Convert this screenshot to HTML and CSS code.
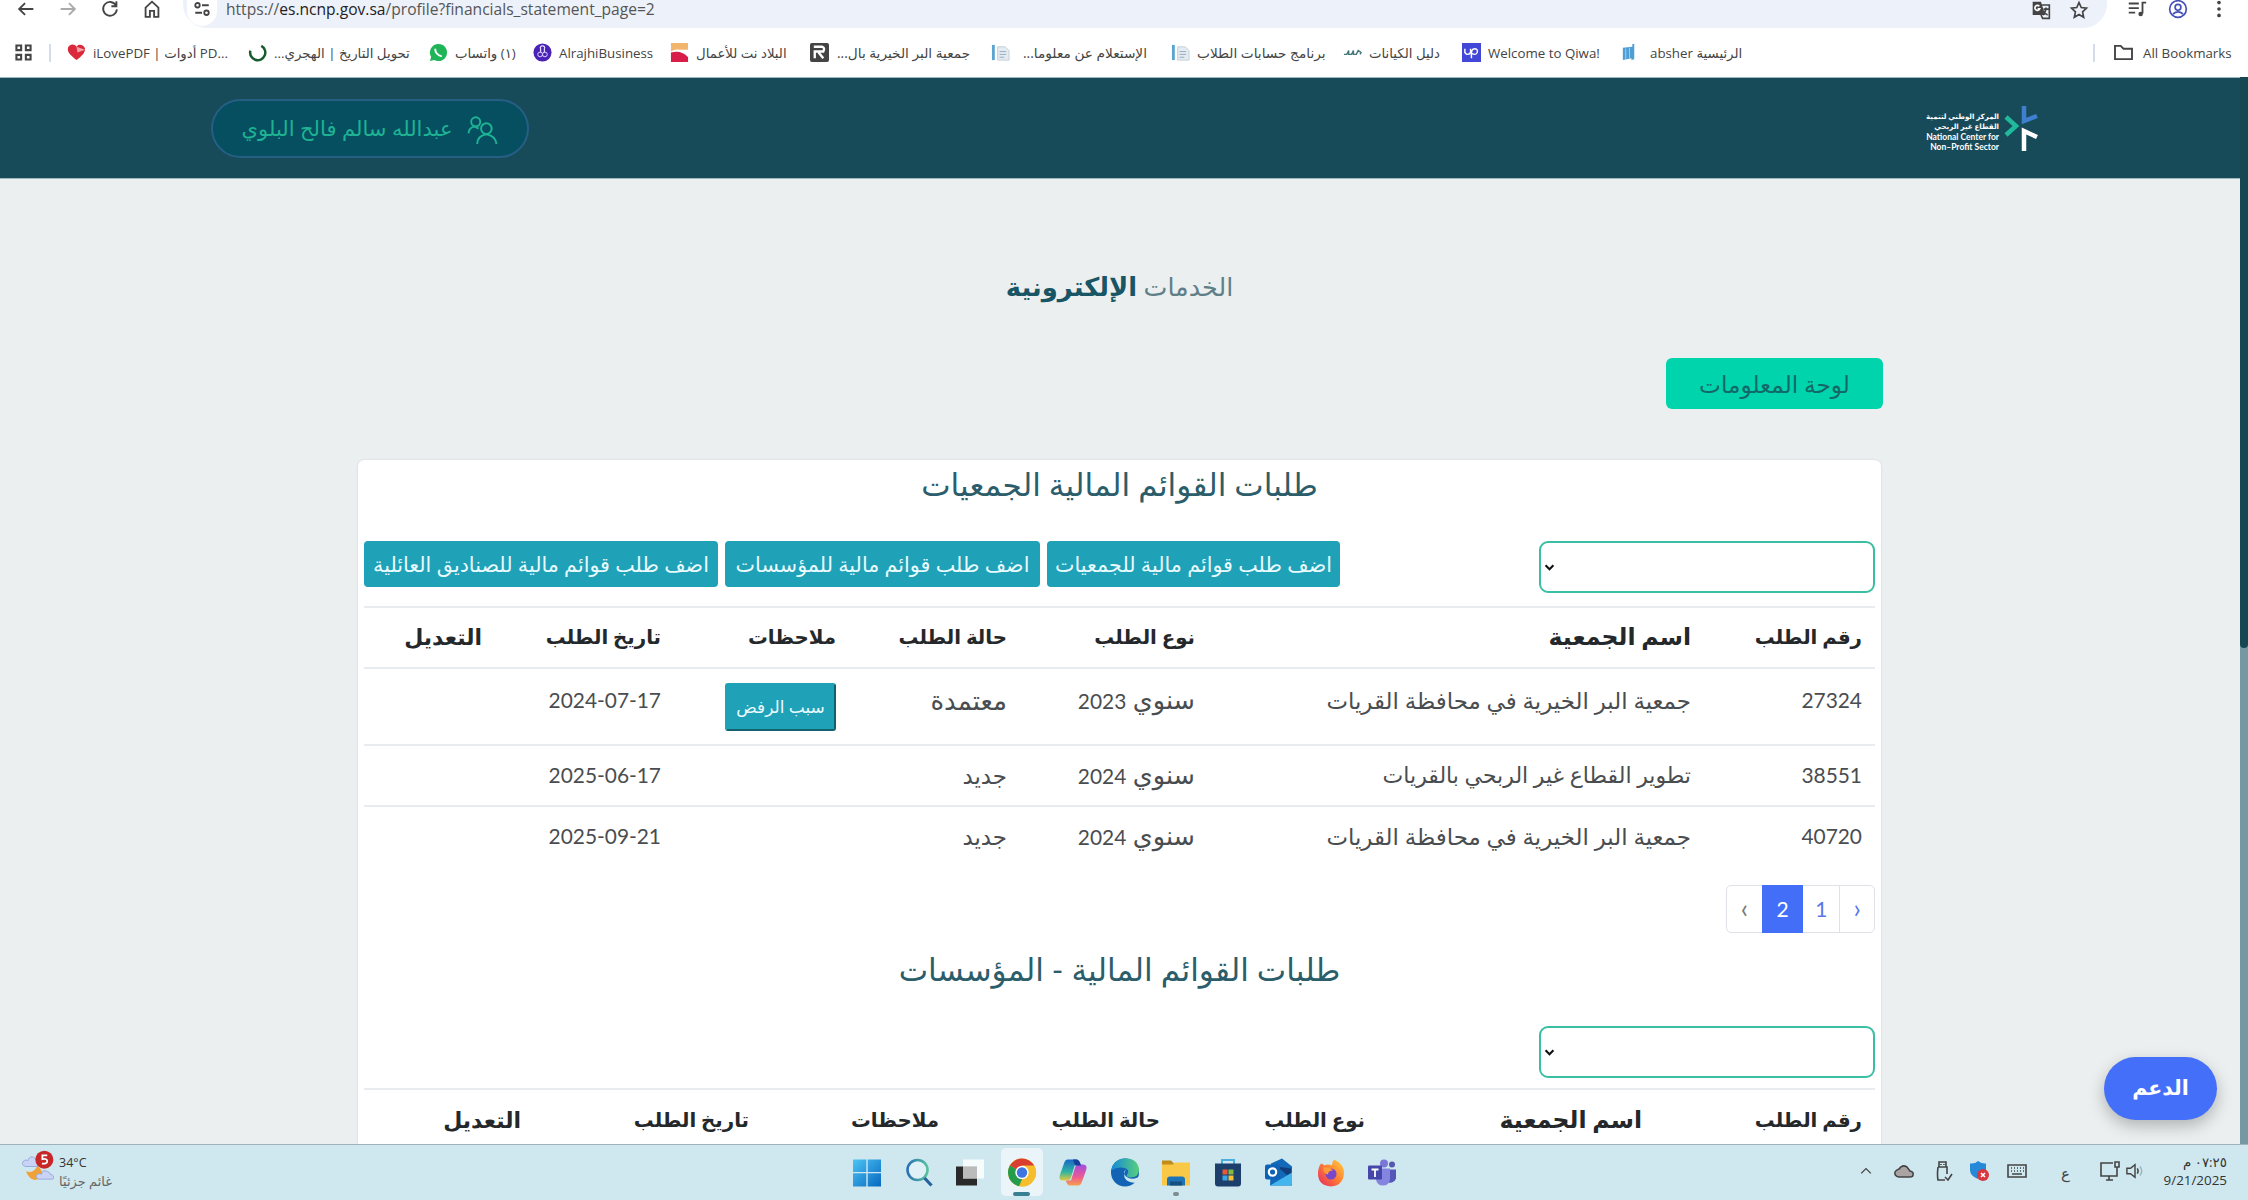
FILE: index.html
```html
<!DOCTYPE html>
<html lang="ar">
<head>
    <meta charset="UTF-8">
    <meta name="viewport" content="width=device-width, initial-scale=1.0">
    <title>الخدمات الإلكترونية</title>
    <link rel="stylesheet" href="styles.css">
</head>
<body>
    <!-- Browser toolbar -->
    <div class="toolbar">
        <svg class="nav-icon" viewBox="0 0 24 24"><path d="M20 12H5M11 5.500 4.500 12l6.500 6.500"/></svg>
        <svg class="nav-icon faded" viewBox="0 0 24 24"><path d="M4 12h15M13 5.500 19.500 12 13 18.500"/></svg>
        <svg class="nav-icon" viewBox="0 0 24 24"><path d="M18.500 8A7.500 7.500 0 1 0 19.500 12.500M19 3.500V9h-5.500"/></svg>
        <svg class="nav-icon" viewBox="0 0 24 24"><path d="M5 10.500 12 4l7 6.500V20.500h-4.700v-6.500H9.700v6.500H5z"/></svg>
        <div class="address">
            <span class="site-info"><svg viewBox="0 0 24 24"><circle cx="6" cy="7" r="3"/><path d="M12 7h9M3 17h9"/><circle cx="18" cy="17" r="3"/></svg></span>
            <span class="url"><i>https://</i>es.ncnp.gov.sa<i>/profile?financials_statement_page=2</i></span>
            <svg class="address-icon translate" viewBox="0 0 24 24"><path class="solid" d="M2 2h10l5 16H2z"/><path d="M13 6h9v16h-8l-2-4M15 11h6M18 9v2q-1 5-4 7M15 13q2 4 5 5"/><path class="letter" d="M10 7.500a3 3 0 1 0 .5 3H8"/></svg>
            <svg class="address-icon" viewBox="0 0 24 24"><path d="m12 3 2.700 6.100 6.300.7-4.700 4.400 1.300 6.500L12 17.300l-5.600 3.400 1.300-6.500L3 9.800l6.300-.7z"/></svg>
        </div>
        <svg class="nav-icon media" viewBox="0 0 24 24"><path d="M3 6h11M3 11h11M3 16h7M18 17V5h4"/><circle class="solid" cx="16" cy="17.500" r="2.500"/></svg>
        <svg class="nav-icon profile" viewBox="0 0 24 24"><circle cx="12" cy="12" r="10"/><circle cx="12" cy="10" r="3.500"/><path d="M6 18q6-5 12 0"/></svg>
        <svg class="nav-icon more" viewBox="0 0 24 24"><circle cx="12" cy="5" r="2"/><circle cx="12" cy="12" r="2"/><circle cx="12" cy="19" r="2"/></svg>
    </div>

    <!-- Bookmarks -->
    <div class="bookmarks">
        <svg class="apps" viewBox="0 0 18 18"><path d="M1.500 1.500h5v5h-5zM11.500 1.500h5v5h-5zM1.500 11.500h5v5h-5zM11.500 11.500h5v5h-5z"/></svg>
        <span class="divider"></span>
        <div class="bm bm-pdf"><svg viewBox="0 0 20 20"><path fill="#d9293a" d="M10 18C4 13 0 10 1 5c1-4 7-5 9-1 2-4 8-2 9 2 0 5-4 8-9 12z"/><path fill="#f3a3a8" d="m10 4 9 3-8 3z"/></svg><span>iLovePDF | أدوات PD...</span></div>
        <div class="bm bm-date"><svg viewBox="0 0 20 20"><path fill="none" stroke="#175c2f" stroke-width="2.600" d="M14 3a8 8 0 1 1-11.500 5"/></svg><span dir="rtl">تحويل التاريخ | الهجري...</span></div>
        <div class="bm bm-wa"><svg viewBox="0 0 20 20"><path fill="#1fb457" d="M10 1a9 9 0 1 1-4.500 16.800L1 19l1.300-4.300A9 9 0 0 1 10 1z"/><path fill="none" stroke="#fff" stroke-width="2" d="M6.500 6q0 6 7 8"/></svg><span dir="rtl">(١) واتساب</span></div>
        <div class="bm bm-rajhi"><svg viewBox="0 0 20 20"><circle cx="10" cy="10" r="9.500" fill="#4a22b5"/><path fill="none" stroke="#e4dcff" stroke-width="1.300" d="M10 3a2 2 0 0 1 2 3v4M10 3a2 2 0 0 0-2 3v4"/><circle cx="7.500" cy="12" r="2.500" fill="none" stroke="#e4dcff"/><circle cx="12.500" cy="12" r="2.500" fill="none" stroke="#e4dcff"/></svg><span>AlrajhiBusiness</span></div>
        <div class="bm bm-bilad"><svg viewBox="0 0 20 20"><path fill="#f1b66c" d="M1 0h18v9H1z"/><path fill="#fff" d="M1 9q4-3 9-2h9v3H1z"/><path fill="#d81e48" d="M1 10q11-3 18 5v5H1z"/></svg><span dir="rtl">البلاد نت للأعمال</span></div>
        <div class="bm bm-birr"><svg viewBox="0 0 20 20"><rect width="20" height="20" rx="2" fill="#444"/><path fill="none" stroke="#fff" stroke-width="2.500" d="M5 16V9h9q2-4-1-5H4M9 10l5 6"/></svg><span dir="rtl">جمعية البر الخيرية بال...</span></div>
        <div class="bm bm-info"><svg viewBox="0 0 20 20"><path fill="#5ba4cf" d="M1 2h3v16H1z"/><path fill="#e4ebf1" stroke="#c4ced8" d="M7 4h8l4 4v10H7z"/><path stroke="#93abc0" d="M9 9h7M9 12h7M9 15h5"/></svg><span dir="rtl">الإستعلام عن معلوما...</span></div>
        <div class="bm bm-students"><svg viewBox="0 0 20 20"><path fill="#5ba4cf" d="M1 2h3v16H1z"/><path fill="#e4ebf1" stroke="#c4ced8" d="M7 4h8l4 4v10H7z"/><path stroke="#93abc0" d="M9 9h7M9 12h7M9 15h5"/></svg><span dir="rtl">برنامج حسابات الطلاب</span></div>
        <div class="bm bm-guide"><svg viewBox="0 0 20 20"><path fill="none" stroke="#40777b" stroke-width="1.500" d="M1 12h3l2-4v4h3l2-4v4h3l2-4 3 2-1 2"/></svg><span dir="rtl">دليل الكيانات</span></div>
        <div class="bm bm-qiwa"><svg viewBox="0 0 20 20"><rect width="20" height="20" fill="#4347d8"/><path fill="none" stroke="#fff" stroke-width="1.500" d="M3 6v4q3 4 6 0V6m0 4q5 4 7 0 1-4-3-4t-3 10"/></svg><span>Welcome to Qiwa!</span></div>
        <div class="bm bm-absher"><svg viewBox="0 0 20 20"><path fill="#4f9ed6" d="M3 5 13 4V1h2v16l-3 1v-2L3 18z"/><path stroke="#a4cdea" d="M6 6v11M10 5v11"/></svg><span>absher الرئيسية</span></div>
        <span class="divider last"></span>
        <svg class="folder" viewBox="0 0 22 18"><path d="M2 2h6l3 3h9v11H2z"/></svg>
        <span class="all">All Bookmarks</span>
    </div>

    <div class="viewport">
        <div class="page" dir="rtl">
            <header>
                <div class="logo">
                    <svg viewBox="0 0 36 48"><path stroke="#3f7fd0" d="M20 2v15l13-5"/><path stroke="#20b99c" d="m2 13 10 9-10 9"/><path stroke="#fff" d="M20 47V27l13 6"/></svg>
                    <div class="logo-text">
                        <span class="ar">المركز الوطني لتنمية</span>
                        <span class="ar">القطاع غير الربحي</span>
                        <span dir="ltr">National Center for</span>
                        <span dir="ltr">Non–Profit Sector</span>
                    </div>
                </div>
                <a class="user">
                    <svg viewBox="0 0 32 30"><circle cx="9" cy="6" r="4.700"/><circle cx="20" cy="13" r="5.500"/><path d="M1.500 18q.5-6.500 6.500-7l4 2M10.500 29q.500-9 9.500-10 9 1 10.500 10"/></svg>
                    <span>عبدالله سالم فالح البلوي</span>
                </a>
            </header>

            <main>
                <h1>الخدمات <b>الإلكترونية</b></h1>
                <a class="dashboard">لوحة المعلومات</a>

                <div class="card">
                    <h2>طلبات القوائم المالية الجمعيات</h2>
                    <div class="filters">
                        <div class="select"><svg viewBox="0 0 12 8"><path d="m1.500 1.500 4.500 4.500 4.500-4.500"/></svg></div>
                        <div class="actions">
                            <a class="btn btn-assoc">اضف طلب قوائم مالية للجمعيات</a>
                            <a class="btn btn-found">اضف طلب قوائم مالية للمؤسسات</a>
                            <a class="btn btn-family">اضف طلب قوائم مالية للصناديق العائلية</a>
                        </div>
                    </div>
                    <table class="requests">
                        <thead>
                            <tr><th>رقم الطلب</th><th class="wide">اسم الجمعية</th><th>نوع الطلب</th><th>حالة الطلب</th><th>ملاحظات</th><th>تاريخ الطلب</th><th class="edit">التعديل</th></tr>
                        </thead>
                        <tbody>
                            <tr><td class="num">27324</td><td>جمعية البر الخيرية في محافظة القريات</td><td class="kind">سنوي <span class="num">2023</span></td><td class="status">معتمدة</td><td class="note"><button>سبب الرفض</button></td><td class="num">2024-07-17</td><td></td></tr>
                            <tr><td class="num">38551</td><td class="tight">تطوير القطاع غير الربحي بالقريات</td><td class="kind">سنوي <span class="num">2024</span></td><td>جديد</td><td></td><td class="num">2025-06-17</td><td></td></tr>
                            <tr><td class="num">40720</td><td>جمعية البر الخيرية في محافظة القريات</td><td class="kind">سنوي <span class="num">2024</span></td><td>جديد</td><td></td><td class="num">2025-09-21</td><td></td></tr>
                        </tbody>
                    </table>
                    <div class="pagination">
                        <span class="arrow">‹</span><span class="one">1</span><span class="active">2</span><span class="arrow off">›</span>
                    </div>

                    <h2>طلبات القوائم المالية - المؤسسات</h2>
                    <div class="filters short">
                        <div class="select"><svg viewBox="0 0 12 8"><path d="m1.500 1.500 4.500 4.500 4.500-4.500"/></svg></div>
                    </div>
                    <table class="foundations">
                        <thead>
                            <tr><th>رقم الطلب</th><th class="wide">اسم الجمعية</th><th>نوع الطلب</th><th>حالة الطلب</th><th>ملاحظات</th><th>تاريخ الطلب</th><th class="edit">التعديل</th></tr>
                        </thead>
                    </table>
                </div>
            </main>
        </div>
        <div class="scrollbar"><div class="thumb"></div></div>
        <a class="support">الدعم</a>
    </div>

    <!-- Taskbar -->
    <div class="taskbar">
        <div class="weather">
            <svg viewBox="0 0 34 34"><path fill="#f0a13a" d="M4 22q8 3 12-6 8 8 4 12-10 8-16-6z"/><path fill="#c9d3f4" stroke="#9aa9dd" d="M4 17q-5-1-3-5 3-3 5-1 2-6 7-3 3 2 3 9zM17 30q-4-2-1-5 2-1 4 0 1-5 6-3 3 1 3 3 5 1 3 5z"/><circle cx="23" cy="10" r="9.300" fill="#c62828"/><path fill="none" stroke="#fff" stroke-width="1.800" d="M26 5.500h-5v4q5-1 5 2t-5.500 2.500"/></svg>
            <div class="weather-text"><span>34°C</span><span class="desc" dir="rtl">غائم جزئيًا</span></div>
        </div>

        <div class="apps-row">
            <span class="app"><svg viewBox="0 0 28 28"><defs><linearGradient id="win" x2="1" y2="1"><stop stop-color="#4cc4f5"/><stop offset="1" stop-color="#0868c0"/></linearGradient></defs><path fill="url(#win)" d="M0 1h13.300v12.400H0zM14.700 1H28v12.400H14.700zM0 14.700h13.300V28H0zM14.700 14.700H28V28H14.700z"/></svg></span>
            <span class="app"><svg viewBox="0 0 28 28"><defs><linearGradient id="lens"><stop stop-color="#2b6fb5"/><stop offset="1" stop-color="#58c19c"/></linearGradient></defs><circle cx="12.500" cy="11.500" r="10" fill="#dff1f6" stroke="url(#lens)" stroke-width="2.600"/><path stroke="#27629f" stroke-width="3.200" d="m19.500 19.500 7 7.500"/></svg></span>
            <span class="app"><svg viewBox="0 0 28 28"><path fill="#292929" d="M0 8h21v19H0z"/><path fill="#fff" fill-opacity=".8" d="M7 1h21v19H7z"/><path fill="#bbb" d="M7 8h14v12H7z"/></svg></span>
            <span class="app current"><svg viewBox="0 0 28 28"><circle cx="14" cy="14" r="14" fill="#f6bd2c"/><path fill="#d93e30" d="M14 14 1.900 7A14 14 0 0 1 26.100 7z"/><path fill="#249b4d" d="M1.900 7 14 14v7l-3 6.700A14 14 0 0 1 1.900 7z"/><path fill="#f6bd2c" d="M14 7h12.100A14 14 0 0 1 12.500 28L20 17z"/><circle cx="14" cy="14" r="6.700" fill="#fff"/><circle cx="14" cy="14" r="5.200" fill="#3d76e0"/></svg></span>
            <span class="app"><svg viewBox="0 0 28 28"><defs><linearGradient id="cop1" y2="1" x2="0"><stop stop-color="#1967c9"/><stop offset=".6" stop-color="#32b5a0"/><stop offset="1" stop-color="#e4c93d"/></linearGradient><linearGradient id="cop2" y2="1" x2="0"><stop stop-color="#a44ce0"/><stop offset=".6" stop-color="#ee5a91"/><stop offset="1" stop-color="#f7a04c"/></linearGradient></defs><path fill="url(#cop1)" d="M9 1h8q3 0 4 5h-5l-4 13q-1 3-4 3H4q-5 0-3-6L5 5q1-4 4-4z"/><path fill="url(#cop2)" d="M19 27h-8q-3 0-4-5h5l4-13q1-3 4-3h4q5 0 3 6l-4 11q-1 4-4 4z"/><path fill="#163f9c" d="M14 1h4q3 1 4 6h-6z"/></svg></span>
            <span class="app"><svg viewBox="0 0 28 28"><defs><linearGradient id="edge"><stop stop-color="#1689d8"/><stop offset="1" stop-color="#58d07c"/></linearGradient></defs><circle cx="14" cy="14" r="14" fill="#1263b4"/><path fill="url(#edge)" d="M.500 12C2-4 27-4 28 11q0 8-9 8-4 0-3-3 3-4-1-6-8-3-14.500 2z"/><path fill="#cfe8ef" d="M15 11q-4 3 0 7 5 4 11.500 1l2-1v6h-3q-9 1-12-5-1-5 1.500-8z"/></svg></span>
            <span class="app opened"><svg viewBox="0 0 28 28"><path fill="#c38b18" d="M0 2h9l3 3v3H0z"/><path fill="#f9c846" d="M0 6h11l2-2h15v23H0z"/><path fill="#1d73b8" d="M5 27v-6q0-3 3-3h12q3 0 3 3v6z"/><path fill="#174f80" d="M8 23h12v4H8z"/></svg></span>
            <span class="app"><svg viewBox="0 0 28 28"><path fill="none" stroke="#4aaee0" stroke-width="2" d="M8 6V1.500h12V6"/><path fill="#1c3f6b" d="M1 5h26v20q0 3-3 3H4q-3 0-3-3z"/><path fill="#e85838" d="M8.500 11h5v5h-5z"/><path fill="#7fba42" d="M14.500 11h5v5h-5z"/><path fill="#3aa4e8" d="M8.500 17h5v5h-5z"/><path fill="#f4c23a" d="M14.500 17h5v5h-5z"/></svg></span>
            <span class="app"><svg viewBox="0 0 28 28"><path fill="#1169b8" d="M6 5 17 0l10 8v19H5z"/><path fill="#123f7c" d="m12 8 14 2v10z"/><path fill="#45b5ee" d="m5 27 22-13v11q0 2-3 2z"/><rect y="6" width="15" height="15" rx="2" fill="#0e62b6"/><circle cx="7.500" cy="13.500" r="3.700" fill="none" stroke="#fff" stroke-width="2.200"/></svg></span>
            <span class="app"><svg viewBox="0 0 28 28"><defs><linearGradient id="fox" x1="1" x2="0" y2="1"><stop stop-color="#ffd43d"/><stop offset=".5" stop-color="#ff7b32"/><stop offset="1" stop-color="#e52568"/></linearGradient></defs><path fill="url(#fox)" d="M4 5q2 0 3 2 4-2 8 0 0-4 2-6 9 4 10 12 0 14-13 15Q1 27 1 15 1 9 4 5z"/><circle cx="14" cy="15.500" r="5.500" fill="#7848c9"/><path fill="#ff9b39" d="M6 9q6-1 10 3-5 0-5 4-5-1-5-7z"/></svg></span>
            <span class="app"><svg viewBox="0 0 28 28"><circle cx="16" cy="5" r="4" fill="#7b77d8"/><circle cx="24" cy="6" r="3" fill="#5558b0"/><path fill="#5457b5" d="M19 11h9v9q-2 5-8 4z"/><path fill="#8584e0" d="M10 10h12v11q-1 6-7 6t-7-6z"/><rect y="7" width="14" height="14" rx="1" fill="#4548a8"/><path fill="none" stroke="#fff" stroke-width="1.800" d="M3.500 11h7M7 11v7.500"/></svg></span>
        </div>

        <div class="tray">
            <svg class="t-chevron" viewBox="0 0 20 20"><path d="m4 13 6-6 6 6"/></svg>
            <svg class="t-cloud" viewBox="0 0 20 20"><path fill="#aaa4a4" d="M5 16Q0 15 1 11q1-2 4-3 3-5 8-2l3 4q4 1 3 4 0 2-3 2z"/></svg>
            <svg class="t-usb" viewBox="0 0 20 20"><path d="M6 1h7v5H6zM5 6h9v7M5 6q-1 8 0 13h7M12 16l3 3 4-6M8 3v1M11 3v1"/></svg>
            <svg class="t-shield" viewBox="0 0 20 20"><path fill="#2589d8" stroke="none" d="M9 0q4 3 8 2.500V9q0 6-8 9-8-3-8-9V2.500Q6 3 9 0z"/><circle cx="14" cy="14" r="6" fill="#d9363e" stroke="none"/><path stroke="#fff" d="m12 12 4 4m0-4-4 4"/></svg>
            <svg class="t-keys" viewBox="0 0 20 20"><path d="M1 4h18v12H1zM4 7h1m2 0h1m2 0h1m2 0h1m2 0h1M4 10h1m2 0h1m2 0h1m2 0h1m2 0h1M5 13h10"/></svg>
            <span class="lang">ع</span>
            <svg class="t-screen" viewBox="0 0 20 20"><path d="M13 2H1v13h16V9M6 19h7M9 15v4M15 1h4v5h-4zM17 6v4"/></svg>
            <svg class="t-sound" viewBox="0 0 20 20"><path d="M1 7h4l5-4v14l-5-4H1z"/><path d="M12.500 7q2 3 0 6"/><path stroke="#9db3ba" d="M15.500 5q4 5 0 10"/></svg>
            <div class="clock"><span dir="rtl">٠٧:٢٥ م</span><span>9/21/2025</span></div>
        </div>
    </div>
</body>
</html>
```
FILE: styles.css
```css
* {
    margin: 0;
    padding: 0;
    box-sizing: border-box;
}
body {
    width: 2248px;
    height: 1200px;
    overflow: hidden;
    display: flex;
    flex-direction: column;
    background: #fff;
    font-family: "Open Sans", "DejaVu Sans", sans-serif;
    color: #444;
}
svg {
    flex: none;
    overflow: visible;
}

/* Browser toolbar */
.toolbar {
    height: 28px;
    display: flex;
    flex: none;
    align-items: flex-start;
    padding-left: 15px;
}
.nav-icon {
    width: 22px;
    height: 22px;
    margin-right: 20px;
    margin-top: -2px;
    fill: none;
    stroke: #444;
    stroke-width: 2;
}
.nav-icon.faded {
    stroke: #aaa;
}
.nav-icon .solid {
    fill: #444;
    stroke: none;
}
.address {
    width: 1924px;
    height: 28px;
    display: flex;
    align-items: flex-start;
    padding-left: 4px;
    background: #edf1fa;
    border-radius: 0 0 24px 24px;
}
.site-info {
    width: 30px;
    height: 26px;
    margin-right: 9px;
    background: #fff;
    border-radius: 0 0 15px 15px;
}
.site-info svg {
    width: 18px;
    height: 18px;
    margin: 0 6px;
    fill: none;
    stroke: #444;
    stroke-width: 2.4;
}
.url {
    flex: 1;
    font-size: 15.6px;
    line-height: 19px;
    color: #222;
}
.url i {
    font-style: normal;
    color: #555;
}
.address-icon {
    width: 20px;
    height: 20px;
    margin-right: 18px;
    fill: none;
    stroke: #444;
    stroke-width: 2;
}
.translate .solid {
    fill: #444;
    stroke: none;
}
.translate .letter {
    stroke: #fff;
}
.media {
    margin-left: 19px;
}
.profile {
    width: 20px;
    stroke: #4650b8;
}
.more {
    fill: #444;
    stroke: none;
    margin-right: 0;
}

/* Bookmarks */
.bookmarks {
    height: 49px;
    display: flex;
    flex: none;
    align-items: center;
    padding-left: 15px;
    font-size: 13.3px;
    white-space: nowrap;
}
.apps {
    width: 17px;
    height: 17px;
    fill: none;
    stroke: #444;
    stroke-width: 2.2;
}
.divider {
    width: 2px;
    height: 18px;
    margin: 0 16px 0 17px;
    background: #d5dcea;
}
.divider.last {
    margin: 0 18px 0 0;
}
.bm {
    display: flex;
    align-items: center;
    gap: 7px;
}
.bm svg {
    width: 19px;
    height: 19px;
}
.bm-pdf { width: 181px; }
.bm-date { width: 181px; }
.bm-wa { width: 104px; }
.bm-rajhi { width: 137px; }
.bm-bilad { width: 140px; }
.bm-birr { width: 181px; gap: 8px; }
.bm-info { width: 180px; gap: 13px; }
.bm-students { width: 172px; }
.bm-guide { width: 119px; }
.bm-qiwa { width: 158px; }
.bm-absher { width: 473px; gap: 11px; }
.bm-birr span,
.bm-info span,
.bm-students span {
    font-size: 13.7px;
}
.folder {
    width: 21px;
    height: 17px;
    margin-right: 9px;
    fill: none;
    stroke: #444;
    stroke-width: 2;
}

/* Page */
.viewport {
    position: relative;
    height: 1067px;
    display: flex;
    flex: none;
    overflow: hidden;
}
.page {
    width: 2240px;
    background: #ebeff0;
    font-family: Lato, "DejaVu Sans", sans-serif;
}
header {
    height: 102px;
    display: flex;
    justify-content: space-between;
    align-items: center;
    padding: 0 200px 0 211px;
    background: #184b59;
    border-top: 1px solid #9db9bf;
    border-bottom: 1px solid #9db9bf;
}
.logo {
    display: flex;
    align-items: center;
    gap: 5px;
    color: #fff;
}
.logo svg {
    width: 36px;
    height: 48px;
    fill: none;
    stroke-width: 4.5;
}
.logo-text {
    display: flex;
    flex-direction: column;
    align-items: flex-start;
    margin-top: 8px;
    font-size: 8.5px;
    font-weight: bold;
    line-height: 10px;
    white-space: nowrap;
}
.logo-text .ar {
    font-size: 7.1px;
}
.user {
    width: 318px;
    height: 59px;
    display: flex;
    align-items: center;
    justify-content: center;
    gap: 15px;
    background: #054f61;
    border: 2px solid #265f83;
    border-radius: 30px;
    font-size: 21.1px;
    line-height: 40px;
    color: #1db393;
}
.user svg {
    width: 31px;
    height: 29px;
    fill: none;
    stroke: #1db393;
    stroke-width: 2;
    transform: translateY(2px);
}
main {
    padding: 86px 359px 0 358px;
}
h1 {
    height: 44px;
    font-size: 25.4px;
    line-height: 42px;
    font-weight: normal;
    text-align: center;
    color: #5f7f88;
}
h1 b {
    font-size: 25.8px;
    color: #185565;
}
.dashboard {
    width: 217px;
    height: 51px;
    display: flex;
    align-items: center;
    justify-content: center;
    margin: 49px -2px 51px 0;
    background: #00d4ad;
    border-radius: 6px;
    font-size: 23.2px;
    line-height: 48px;
    color: #126a68;
}
.card {
    height: 800px;
    padding: 0 6px;
    background: #fff;
    border-radius: 6px 6px 0 0;
    box-shadow: 0 0 2px rgba(0, 0, 0, 0.15);
}
h2 {
    height: 50px;
    font-size: 31.2px;
    line-height: 48px;
    font-weight: normal;
    text-align: center;
    color: #2c5d6a;
}
.filters {
    height: 65px;
    display: flex;
    justify-content: space-between;
    align-items: flex-start;
    margin-top: 31px;
}
.filters.short {
    height: 62px;
}
.select {
    width: 336px;
    height: 52px;
    display: flex;
    align-items: center;
    justify-content: flex-end;
    padding-left: 3px;
    border: 2px solid #3bbfa4;
    border-radius: 9px;
}
.select svg {
    width: 11px;
    height: 7px;
    fill: none;
    stroke: #111;
    stroke-width: 2.4;
}
.actions {
    display: flex;
    gap: 7px;
}
.btn {
    height: 46px;
    display: flex;
    align-items: center;
    justify-content: center;
    background: #1fa1b7;
    border-radius: 4px;
    font-size: 20.7px;
    white-space: nowrap;
    color: #e9fbff;
}
.btn-assoc { width: 293px; }
.btn-found { width: 315px; }
.btn-family { width: 354px; }

table {
    width: 1511px;
    table-layout: fixed;
    border-collapse: collapse;
}
th,
td {
    border-top: 2px solid #e9ecee;
    padding: 0 13px 2px;
    text-align: right;
    white-space: nowrap;
}
th {
    height: 61px;
    font-size: 19.8px;
    color: #25282b;
}
th.wide {
    font-size: 23.6px;
}
th.edit {
    font-size: 22px;
}
td {
    height: 61px;
    font-size: 22.9px;
    line-height: 28px;
    color: #4a4d50;
}
td.tight {
    font-size: 22px;
}
td.kind {
    font-size: 25.5px;
}
td.num,
.num {
    font-size: 20.9px;
}
td.status {
    font-size: 26px;
}
tbody tr:first-child td {
    height: 77px;
    padding-bottom: 14px;
}
tbody tr:first-child td.note {
    padding-bottom: 0;
}
.requests th:nth-child(1) { width: 171px; }
.requests th:nth-child(2) { width: 496px; }
.requests th:nth-child(3) { width: 188px; }
.requests th:nth-child(4) { width: 171px; }
.requests th:nth-child(5) { width: 175px; }
.requests th:nth-child(6) { width: 179px; }
.foundations th:nth-child(1) { width: 220px; }
.foundations th:nth-child(2) { width: 277px; }
.foundations th:nth-child(3) { width: 205px; }
.foundations th:nth-child(4) { width: 221px; }
.foundations th:nth-child(5) { width: 190px; }
.foundations th:nth-child(6) { width: 228px; }
.note button {
    width: 111px;
    height: 48px;
    display: block;
    background: #1fa1b7;
    border: 2px solid #1fa1b7;
    border-right-color: #11616f;
    border-bottom-color: #11616f;
    border-radius: 3px;
    font-family: inherit;
    font-size: 17px;
    color: #e9fbff;
}
.pagination {
    width: 149px;
    height: 48px;
    display: flex;
    margin: 18px 0 12px;
    border: 1px solid #dee2e6;
    border-radius: 5px;
    font-size: 21px;
    line-height: 46px;
    text-align: center;
    color: #5a78ea;
}
.arrow {
    width: 35px;
    font-size: 26px;
    line-height: 44px;
    border-left: 1px solid #dee2e6;
}
.arrow.off {
    border: none;
    color: #777;
}
.one {
    width: 36px;
}
.active {
    width: 42px;
    height: 48px;
    margin-top: -1px;
    background: #436ef8;
    line-height: 48px;
    color: #fff;
}

.scrollbar {
    width: 8px;
    background: #7499a2;
}
.thumb {
    height: 571px;
    background: #164753;
    border-radius: 0 0 4px 4px;
}
/* Support button floats over the page */
.support {
    position: absolute;
    right: 31px;
    bottom: 24px;
    width: 113px;
    height: 63px;
    background: #446ff8;
    border-radius: 32px;
    box-shadow: 0 6px 16px rgba(0, 0, 0, 0.25);
    font-family: Lato, "DejaVu Sans", sans-serif;
    font-size: 20.5px;
    font-weight: bold;
    line-height: 61px;
    text-align: center;
    color: #fff;
}

/* Taskbar */
.taskbar {
    height: 56px;
    display: flex;
    flex: none;
    padding-left: 22px;
    background: #cfe8ef;
    border-top: 1px solid #9fb2b7;
}
.weather {
    width: 824px;
    display: flex;
    gap: 4px;
    padding-top: 5px;
}
.weather svg {
    width: 33px;
    height: 33px;
}
.weather-text {
    display: flex;
    flex-direction: column;
    align-items: flex-start;
    padding-top: 4px;
    font-size: 12.5px;
    line-height: 18px;
    color: #333;
}
.desc {
    font-size: 13px;
    color: #666;
}
.apps-row {
    display: flex;
    gap: 9.5px;
    padding-top: 3px;
}
.app {
    width: 42px;
    height: 48px;
    display: flex;
    flex-direction: column;
    align-items: center;
    padding-top: 10px;
    gap: 5px;
    border-radius: 5px;
}
.app svg {
    width: 28px;
    height: 29px;
}
.app.current {
    background: #eaf4f9;
}
.app.current::after,
.app.opened::after {
    content: "";
    width: 17px;
    height: 4px;
    border-radius: 2px;
    background: #3a7f91;
}
.app.opened::after {
    width: 6px;
    background: #7d8d92;
}
.tray {
    display: flex;
    align-items: center;
    padding-left: 455px;
    padding-bottom: 3px;
}
.tray svg {
    width: 20px;
    height: 20px;
    fill: none;
    stroke: #444;
    stroke-width: 1.6;
}
.tray .t-chevron { width: 16px; margin-right: 20px; }
.tray .t-cloud { margin-right: 19px; }
.tray .t-usb { margin-right: 16px; }
.tray .t-shield { margin-right: 18px; }
.tray .t-keys { margin-right: 34px; }
.tray .t-screen { margin-right: 6px; }
.tray .t-sound { width: 18px; }
.lang {
    width: 39px;
    font-size: 15px;
    padding-top: 4px;
}
.clock {
    width: 83px;
    display: flex;
    flex-direction: column;
    align-items: flex-end;
    font-size: 13.4px;
    line-height: 18px;
    white-space: nowrap;
    color: #333;
}
```
